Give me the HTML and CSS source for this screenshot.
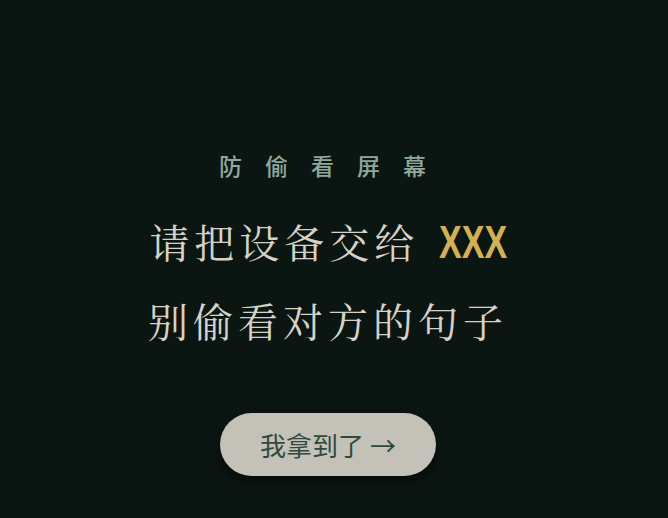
FILE: index.html
```html
<!DOCTYPE html>
<html lang="zh-CN">
<head>
<meta charset="utf-8">
<link rel="stylesheet" href="styles.css">
</head>
<body>
<main class="screen">
  <p class="eyebrow">防偷看屏幕</p>
  <h1 class="title">
    <span class="line">请把设备交给 <span class="name">XXX</span></span>
    <span class="line">别偷看对方的句子</span>
  </h1>
  <button class="cta">我拿到了 →</button>
</main>
</body>
</html>
```
FILE: styles.css
```css
html, body {
  margin: 0;
  padding: 0;
  background: #0b1612;
  height: 100%;
}
.screen {
  height: 518px;
  display: flex;
  flex-direction: column;
  align-items: center;
  justify-content: flex-start;
  padding: 148px 12px 0 0;
  box-sizing: border-box;
  font-family: "Noto Sans CJK SC", sans-serif;
}
.eyebrow {
  margin: 0;
  font-size: 23px;
  line-height: 34px;
  font-weight: 500;
  letter-spacing: 23px;
  padding-left: 12px;
  color: #8fa89b;
}
.title {
  margin: 20px 0 0;
  font-family: "AR PL UKai CN", "KaiTi", "STKaiti", "Noto Serif CJK SC", serif;
  font-weight: normal;
  font-size: 40px;
  line-height: 77px;
  color: #d6d2c8;
  text-align: center;
  letter-spacing: 5px;
}
.line { display: block; }
.name {
  display: inline-block;
  margin-left: 4px;
  font-family: "Liberation Sans", sans-serif;
  font-weight: bold;
  font-size: 46px;
  color: #d4b055;
  letter-spacing: 0;
  transform: scaleX(0.74);
  transform-origin: left center;
  width: 68px;
}
.cta {
  margin-top: 55px;
  width: 216px;
  height: 63px;
  border: none;
  border-radius: 32px;
  background: #c4c1b9;
  color: #2f4a3c;
  font-family: "Noto Sans CJK SC", sans-serif;
  font-size: 26px;
  padding: 0;
  box-shadow: 0 6px 10px rgba(0,0,0,0.5);
}
```
